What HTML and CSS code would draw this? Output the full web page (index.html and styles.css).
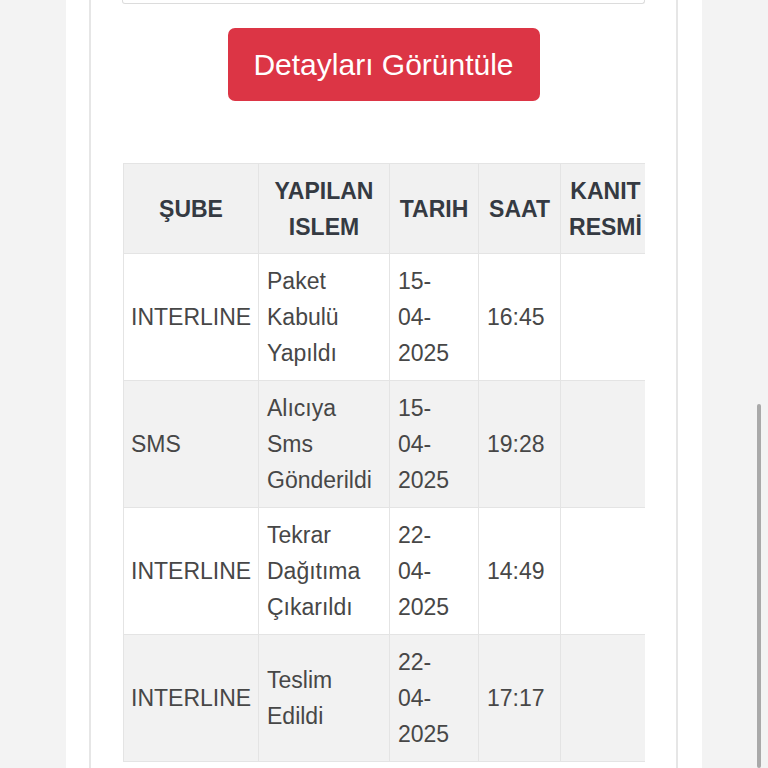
FILE: index.html
```html
<!DOCTYPE html>
<html lang="tr">
<head>
<meta charset="utf-8">
<title>Gönderi Takip</title>
<link rel="stylesheet" href="styles.css">
</head>
<body>
<div class="page">
  <main class="column">
    <section class="card">
      <div class="field"></div>
      <div class="actions">
        <button class="btn-danger" type="button">Detayları Görüntüle</button>
      </div>
      <div class="table-wrap">
        <table class="track">
          <colgroup>
            <col class="c-branch">
            <col class="c-action">
            <col class="c-date">
            <col class="c-time">
            <col class="c-proof">
          </colgroup>
          <thead>
            <tr>
              <th>ŞUBE</th>
              <th>YAPILAN ISLEM</th>
              <th>TARIH</th>
              <th>SAAT</th>
              <th>KANIT RESMİ</th>
            </tr>
          </thead>
          <tbody>
            <tr>
              <td class="branch">INTERLINE</td>
              <td>Paket Kabulü Yapıldı</td>
              <td class="date">15-04-2025</td>
              <td>16:45</td>
              <td></td>
            </tr>
            <tr>
              <td class="branch">SMS</td>
              <td>Alıcıya Sms Gönderildi</td>
              <td class="date">15-04-2025</td>
              <td>19:28</td>
              <td></td>
            </tr>
            <tr>
              <td class="branch">INTERLINE</td>
              <td>Tekrar Dağıtıma Çıkarıldı</td>
              <td class="date">22-04-2025</td>
              <td>14:49</td>
              <td></td>
            </tr>
            <tr>
              <td class="branch">INTERLINE</td>
              <td>Teslim Edildi</td>
              <td class="date">22-04-2025</td>
              <td>17:17</td>
              <td></td>
            </tr>
          </tbody>
        </table>
      </div>
    </section>
  </main>
  <div class="scrollbar"></div>
</div>
</body>
</html>
```

FILE: styles.css
```css
html, body {
  margin: 0;
  padding: 0;
}

body {
  background: #f3f3f3;
  font-family: "Liberation Sans", Arial, sans-serif;
  overflow: hidden;
}

.page {
  height: 768px;
  overflow: hidden;
}

.column {
  width: 636px;
  margin-left: 66px;
  background: #ffffff;
  min-height: 768px;
  display: flex;
}

.card {
  margin-left: 23px;
  width: 523px;
  padding: 0 31px;
  border-left: 2px solid #e6e6e6;
  border-right: 2px solid #e6e6e6;
  min-height: 768px;
}

.field {
  height: 3px;
  border: 1px solid #dcdcdc;
  border-top: none;
  border-radius: 0 0 3px 3px;
}

.actions {
  display: flex;
  justify-content: center;
  margin-top: 24px;
}

.btn-danger {
  width: 312px;
  height: 73px;
  border: none;
  border-radius: 7px;
  background: #dc3545;
  color: #ffffff;
  font-family: "Liberation Sans", Arial, sans-serif;
  font-size: 30px;
  padding: 0;
}

.table-wrap {
  margin-top: 62px;
  margin-left: 1px;
  overflow: hidden;
}

.track {
  width: 527px;
  table-layout: fixed;
  border-collapse: collapse;
  font-size: 23px;
  line-height: 36px;
  color: #474747;
}

.c-branch { width: 135px; }
.c-action { width: 131px; }
.c-date { width: 89px; }
.c-time { width: 82px; }
.c-proof { width: 90px; }

.track th,
.track td {
  border: 1px solid #e4e4e4;
  padding: 9px 8px;
  vertical-align: middle;
}

.track th {
  background: #f1f1f1;
  color: #353a42;
  font-weight: bold;
  text-align: center;
  padding-top: 8.5px;
  padding-bottom: 8.5px;
}

.track td {
  text-align: left;
  padding-right: 5px;
}

.track td.branch {
  padding-left: 7px;
  padding-right: 3px;
}

.track td.date {
  padding-right: 18px;
}

.track tbody tr:nth-child(even) td {
  background: #f2f2f2;
}

.scrollbar {
  position: fixed;
  right: 7px;
  top: 404px;
  bottom: 0;
  width: 4px;
  border-radius: 2px;
  background: #a9a9a9;
}
```
